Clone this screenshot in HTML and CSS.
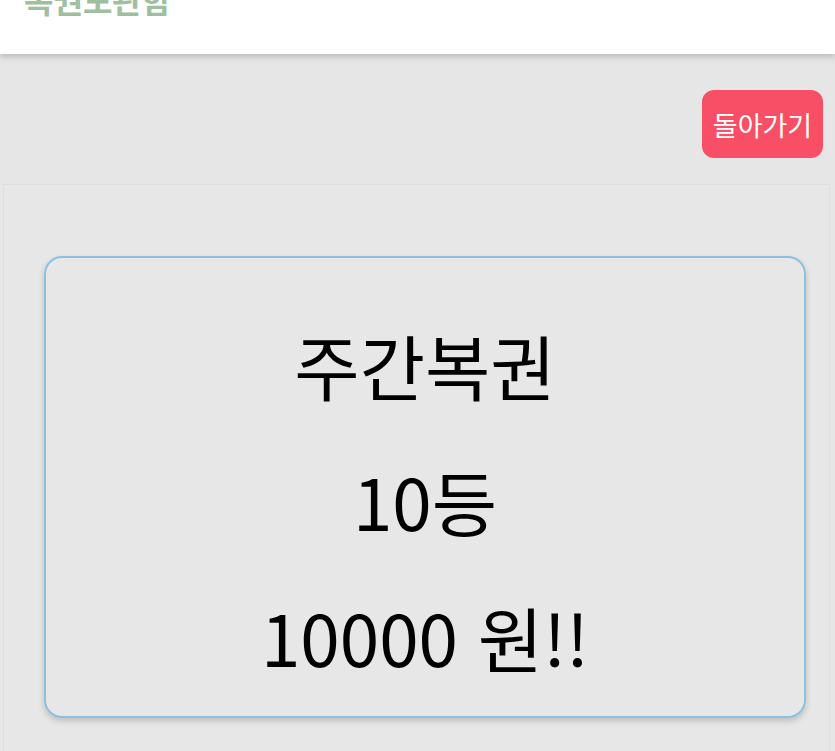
FILE: index.html
```html
<!DOCTYPE html>
<html lang="ko">
<head>
  <meta charset="UTF-8" />
  <title>복권보관함</title>
  <meta name="viewport" content="width=device-width, initial-scale=1.0">
  <link rel="stylesheet" href="styles.css">
</head>
<body>
  <header class="topbar">
    <h1 class="brand">복권보관함</h1>
  </header>

  <div class="actions">
    <button type="button" class="back-btn">돌아가기</button>
  </div>

  <section class="panel">
    <div class="ticket">
      <p class="ticket-line">주간복권</p>
      <p class="ticket-line">10등</p>
      <p class="ticket-line">10000 원!!</p>
    </div>
  </section>
</body>
</html>
```

FILE: styles.css
```css
body {
  margin: 0;
  font-family: "Noto Sans CJK KR", "Noto Sans", sans-serif;
  background: #e6e6e6;
  height: 751px;
  overflow: hidden;
}
.topbar {
  height: 54px;
  background: #fff;
  box-shadow: 0 3px 6px rgba(0,0,0,0.18);
  overflow: hidden;
  position: relative;
  z-index: 1;
}
.brand {
  margin: -24px 0 0 24px;
  font-size: 32px;
  font-weight: bold;
  color: #9fc0a0;
  line-height: 46px;
}
.actions {
  display: flex;
  justify-content: flex-end;
  padding: 36px 12px 26px;
}
.back-btn {
  width: 121px;
  height: 68px;
  background: #f94f66;
  color: #fff;
  border: none;
  border-radius: 12px;
  font-family: inherit;
  font-size: 27px;
  cursor: pointer;
  padding: 0;
}
.panel {
  margin: 0 5px 0 3px;
  border: 1px solid #dedede;
  background: #e7e7e7;
  padding: 71px 23px 40px 40px;
}
.ticket {
  border: 2px solid #8cc0e2;
  border-radius: 18px;
  box-shadow: 0 3px 6px rgba(0,0,0,0.18);
  display: flex;
  flex-direction: column;
  align-items: center;
  padding-top: 38px;
  box-sizing: content-box;
  height: 420px;
}
.ticket-line {
  margin: 0;
  font-size: 71px;
  line-height: 136px;
  color: #000;
}
```
